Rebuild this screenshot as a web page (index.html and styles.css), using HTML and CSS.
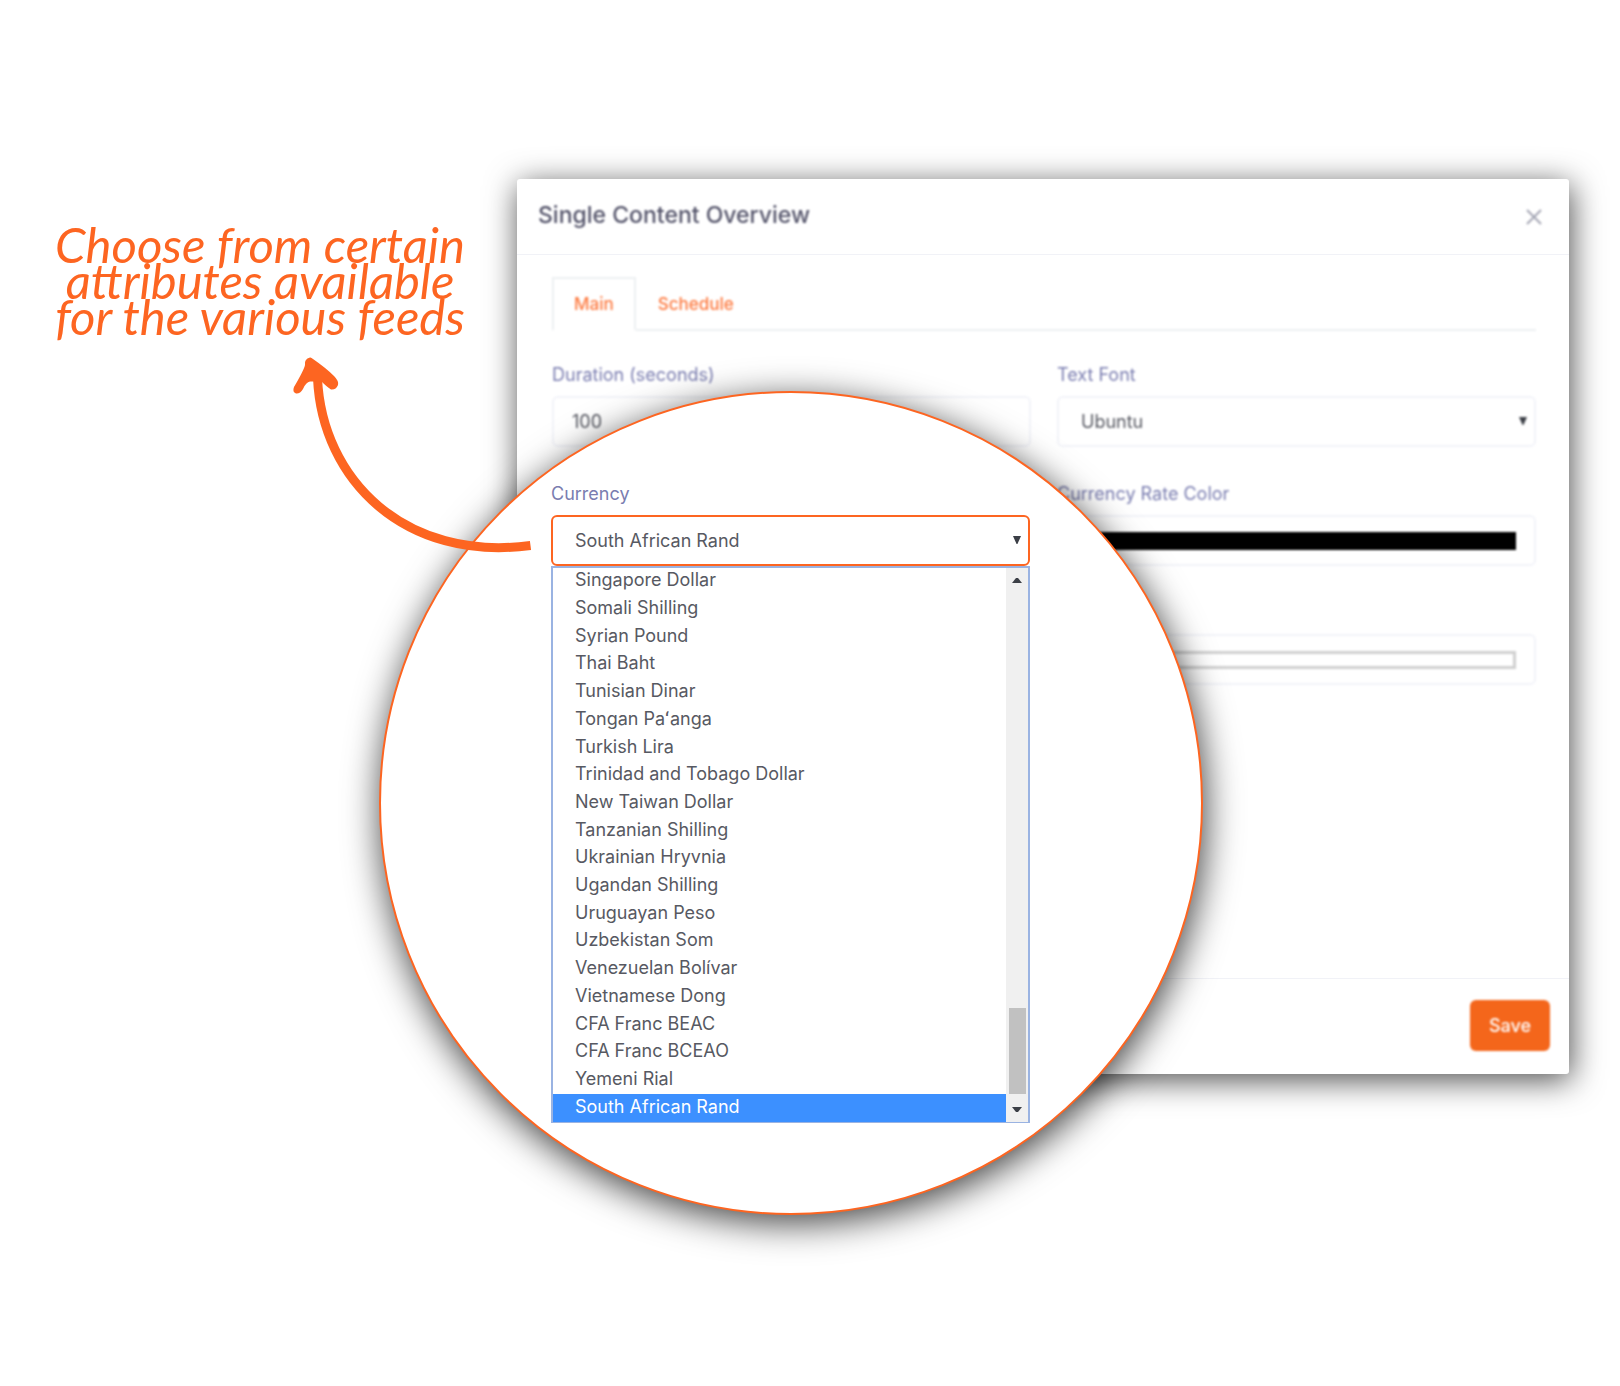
FILE: index.html
```html
<!DOCTYPE html>
<html lang="en">
<head>
<meta charset="utf-8">
<meta name="viewport" content="width=device-width, initial-scale=1">
<title>Single Content Overview</title>
<link rel="stylesheet" href="styles.css">
</head>
<body>
<main class="stage">
  <section class="modal" role="dialog" aria-labelledby="modal-title">
    <header class="modal-header">
      <h1 class="modal-title" id="modal-title">Single Content Overview</h1>
      <button class="close" type="button" aria-label="Close">
        <svg width="16" height="16" viewBox="0 0 16 16" aria-hidden="true"><path d="M1 1 15 15M15 1 1 15" fill="none" stroke="currentColor" stroke-width="2"/></svg>
      </button>
    </header>
    <div class="modal-body">
      <nav class="tabs">
        <a class="tab tab-active" href="#main">Main</a>
        <a class="tab" href="#schedule">Schedule</a>
      </nav>
      <form class="fields" id="main">
        <div class="field">
          <label class="label" for="duration">Duration (seconds)</label>
          <input class="control" id="duration" type="text" value="100">
        </div>
        <div class="field">
          <label class="label" for="font">Text Font</label>
          <div class="select-wrap">
            <select class="control control-select" id="font"><option>Ubuntu</option></select>
            <svg class="caret" width="8" height="8" viewBox="0 0 9 9" aria-hidden="true"><path d="M0 0H9L5 9H4Z" fill="currentColor"/></svg>
          </div>
        </div>
        <div class="field field-right">
          <label class="label" for="rate-color">Currency Rate Color</label>
          <button class="control swatch-box" id="rate-color" type="button"><span class="swatch swatch-black"></span></button>
        </div>
        <div class="field field-right">
          <button class="control swatch-box" type="button" aria-label="Color"><span class="swatch"></span></button>
        </div>
      </form>
    </div>
    <footer class="modal-footer">
      <button class="save" type="button">Save</button>
    </footer>
  </section>

  <section class="lens">
    <div class="field">
      <label class="label" for="currency">Currency</label>
      <div class="select-wrap">
        <select class="control control-select control-focus" id="currency"><option>South African Rand</option></select>
        <svg class="caret" width="8" height="8" viewBox="0 0 9 9" aria-hidden="true"><path d="M0 0H9L5 9H4Z" fill="currentColor"/></svg>
      </div>
      <div class="dropdown">
        <ul class="options" role="listbox" aria-label="Currency">
          <li class="option" role="option">Singapore Dollar</li>
          <li class="option" role="option">Somali Shilling</li>
          <li class="option" role="option">Syrian Pound</li>
          <li class="option" role="option">Thai Baht</li>
          <li class="option" role="option">Tunisian Dinar</li>
          <li class="option" role="option">Tongan Paʻanga</li>
          <li class="option" role="option">Turkish Lira</li>
          <li class="option" role="option">Trinidad and Tobago Dollar</li>
          <li class="option" role="option">New Taiwan Dollar</li>
          <li class="option" role="option">Tanzanian Shilling</li>
          <li class="option" role="option">Ukrainian Hryvnia</li>
          <li class="option" role="option">Ugandan Shilling</li>
          <li class="option" role="option">Uruguayan Peso</li>
          <li class="option" role="option">Uzbekistan Som</li>
          <li class="option" role="option">Venezuelan Bolívar</li>
          <li class="option" role="option">Vietnamese Dong</li>
          <li class="option" role="option">CFA Franc BEAC</li>
          <li class="option" role="option">CFA Franc BCEAO</li>
          <li class="option" role="option">Yemeni Rial</li>
          <li class="option option-selected" role="option" aria-selected="true">South African Rand</li>
        </ul>
        <div class="scrollbar" aria-hidden="true">
          <svg width="10" height="6" viewBox="0 0 10 6"><path d="M0 6 4 1H6L10 6Z" fill="currentColor"/></svg>
          <span class="thumb"></span>
          <svg width="10" height="6" viewBox="0 0 10 6"><path d="M0 0 4 5H6L10 0Z" fill="currentColor"/></svg>
        </div>
      </div>
    </div>
  </section>

  <p class="note">Choose from certain<br>attributes available<br>for the various feeds</p>
  <svg class="arrow" width="250" height="200" viewBox="285 355 250 200" aria-hidden="true">
    <path d="M317.500 378C322 480 405 562 530.500 545.500" fill="none" stroke="currentColor" stroke-width="9"/>
    <path d="M310 357.500Q304 359 305 365Q304 370 294 387Q292 392 296 393.500Q300 394 303 389Q306 382 310 381.500H321.500Q327 387 331 389.500Q336 390 338 385Q339 381 334 376Q326 368 313 359Q311 357 310 357.500Z" fill="currentColor"/>
  </svg>
</main>
</body>
</html>
```
FILE: styles.css
```css
* {
  box-sizing: border-box;
}

body {
  margin: 0;
  background: #fff;
  color: #575962;
  font-family: Inter, "Open Sans", sans-serif;
  font-size: 18px;
  line-height: 28px;
}

button,
input,
select {
  font: inherit;
  color: inherit;
}

.stage {
  position: relative;
  min-height: 100vh;
  padding: 179px 51px 136px 517px;
}

/* Dialog behind the lens, slightly out of focus */
.modal {
  display: flex;
  flex-direction: column;
  min-height: 895px;
  border-radius: 3px;
  background: #fff;
  box-shadow: 2px 6px 32px rgba(0, 0, 0, 0.7);
}

.modal-header {
  display: flex;
  align-items: center;
  justify-content: space-between;
  height: 76px;
  padding: 0 27px 4px 21px;
  border-bottom: 1px solid #f1f2f7;
}

.modal-title {
  margin: 0;
  color: #54546a;
  font-size: 23px;
  font-weight: 500;
  filter: blur(1px);
}

.close {
  display: flex;
  padding: 0;
  margin-top: 4px;
  border: 0;
  background: none;
  color: #a5a7b5;
  filter: blur(1px);
}

.modal-body {
  flex: 1;
  padding: 22px 33px 0 35px;
  filter: blur(1px);
}

.tabs {
  display: flex;
  border-bottom: 2px solid #edf0f2;
}

.tab {
  display: flex;
  align-items: center;
  height: 52px;
  padding: 2px 22px 0;
  color: #fd7a40;
  font-size: 17px;
  font-weight: 500;
  text-decoration: none;
}

.tab-active {
  height: 54px;
  margin-bottom: -2px;
  padding: 0 20px;
  border: 2px solid #edf0f2;
  border-bottom-color: #fff;
}

.fields {
  display: grid;
  grid-template-columns: 1fr 1fr;
  grid-auto-rows: 87px;
  gap: 32px 26px;
  padding-top: 29px;
}

.field {
  display: flex;
  flex-direction: column;
  justify-content: flex-end;
}

.field-right {
  grid-column: 2;
}

.label {
  margin-bottom: 7px;
  color: #7a7db0;
  font-size: 18px;
}

.control {
  display: block;
  width: 100%;
  height: 51px;
  padding: 0 18px;
  border: 2px solid #f2f3f9;
  border-radius: 6px;
  background: #fff;
}

.control-select {
  padding: 0 22px;
  appearance: none;
}

.control-focus {
  border-color: #fd6521;
}

.select-wrap {
  position: relative;
}

.caret {
  position: absolute;
  top: 21px;
  right: 9px;
  color: #3b3f46;
}

.swatch-box {
  display: flex;
  align-items: center;
}

.swatch {
  flex: 1;
  height: 18px;
  border: 3px solid #d0d0d0;
}

.swatch-black {
  border-color: #000;
  background: #000;
}

.modal-footer {
  display: flex;
  justify-content: flex-end;
  align-items: flex-start;
  padding: 21px 19px 23px;
  border-top: 1px solid #f1f2f7;
}

.save {
  width: 80px;
  height: 51px;
  padding: 0;
  border: 0;
  border-radius: 6px;
  background: #f4661b;
  color: #fff;
  font-weight: 500;
  filter: blur(1px);
}

/* Round magnified area with the open currency list */
.lens {
  position: absolute;
  top: 391px;
  left: 379px;
  width: 824px;
  height: 824px;
  padding: 87px 171px 0 170px;
  border: 2px solid #fd6521;
  border-radius: 50%;
  background: #fff;
  box-shadow: 2px 8px 36px rgba(0, 0, 0, 0.75);
}

.dropdown {
  display: flex;
  height: 557px;
  border: 2px solid #9ab3e2;
  border-bottom-width: 1px;
}

.options {
  display: flex;
  flex: 1;
  flex-direction: column;
  margin: 0;
  padding: 0;
  list-style: none;
}

.option {
  display: flex;
  flex: 1;
  align-items: center;
  padding: 0 22px 3px;
  line-height: 24px;
}

.option-selected {
  background: #3c90ff;
  color: #fff;
}

.scrollbar {
  display: flex;
  flex-direction: column;
  align-items: center;
  width: 22px;
  padding: 9px 0;
  background: #f0f0f0;
  color: #3b3f46;
}

.thumb {
  width: 17px;
  height: 86px;
  margin: auto 0 13px;
  background: #c1c1c1;
}

.note {
  position: absolute;
  top: 226px;
  left: 30px;
  width: 460px;
  margin: 0;
  color: #fd6521;
  font-family: Lato, "Open Sans", sans-serif;
  font-size: 49px;
  font-style: italic;
  line-height: 36px;
  text-align: center;
}

.arrow {
  position: absolute;
  top: 355px;
  left: 285px;
  color: #fd6521;
}
```
